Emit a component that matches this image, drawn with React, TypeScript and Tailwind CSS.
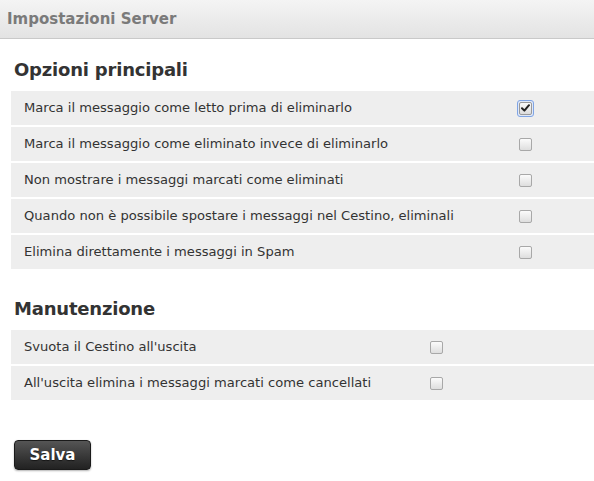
const main = [
  { label: 'Marca il messaggio come letto prima di eliminarlo', checked: true },
  { label: 'Marca il messaggio come eliminato invece di eliminarlo', checked: false },
  { label: 'Non mostrare i messaggi marcati come eliminati', checked: false },
  { label: 'Quando non è possibile spostare i messaggi nel Cestino, eliminali', checked: false },
  { label: 'Elimina direttamente i messaggi in Spam', checked: false },
];

const maintenance = [
  { label: "Svuota il Cestino all'uscita", checked: false },
  { label: "All'uscita elimina i messaggi marcati come cancellati", checked: false },
];

function Check({ checked }: { checked: boolean }) {
  if (checked) {
    return (
      <span className="flex h-[17px] w-[17px] items-center justify-center rounded-[3px] border border-[#7fa4e4] bg-[#dfe8f8]">
        <span className="flex h-[13px] w-[13px] items-center justify-center rounded-[2px] border border-[#9a9a9a] bg-gradient-to-b from-[#fafafa] to-[#dcdcdc]">
          <svg width="9" height="8" viewBox="0 0 9 8">
            <path d="M1 4.2 L3.4 6.6 L8 1.2" fill="none" stroke="#222" strokeWidth="2" strokeLinecap="round" strokeLinejoin="round" />
          </svg>
        </span>
      </span>
    );
  }
  return (
    <span className="m-[2px] block h-[13px] w-[13px] rounded-[2px] border border-[#a8a8a8] bg-gradient-to-b from-[#fbfbfb] to-[#dedede]" />
  );
}

function Section({ title, rows, labelWidth }: { title: string; rows: { label: string; checked: boolean }[]; labelWidth: string }) {
  return (
    <section>
      <h2 className="pl-[14px] text-[18px] font-bold leading-[22px] tracking-[-0.2px] text-[#333]">{title}</h2>
      <div className="ml-[11px] mt-[10px] flex flex-col gap-[2px]">
        {rows.map((r) => (
          <div key={r.label} className="flex h-[34px] items-center bg-[#eeeeee]">
            <div className={`${labelWidth} shrink-0 pl-[13px] text-[13.1px] text-[#333]`}>{r.label}</div>
            <Check checked={r.checked} />
          </div>
        ))}
      </div>
    </section>
  );
}

export default function App() {
  return (
    <div className="h-[481px] w-[594px] bg-white" style={{ fontFamily: '"DejaVu Sans", Verdana, sans-serif' }}>
      <div className="flex h-[39px] items-center border-b border-[#c9c9c9] bg-gradient-to-b from-[#f4f4f4] to-[#e3e3e3] pl-[7px]">
        <span className="text-[15px] font-bold text-[#7a7a7a]">Impostazioni Server</span>
      </div>
      <div className="pt-[20px]">
        <Section title="Opzioni principali" rows={main} labelWidth="w-[506px]" />
      </div>
      <div className="pt-[29px]">
        <Section title="Manutenzione" rows={maintenance} labelWidth="w-[417px]" />
      </div>
      <div className="pl-[14px] pt-[40px]">
        <button className="h-[30px] w-[77px] rounded-[4px] border border-[#1a1a1a] bg-gradient-to-b from-[#555] to-[#222] text-[15px] font-bold text-white shadow-[0_1px_2px_rgba(0,0,0,0.3)] [text-shadow:0_1px_1px_rgba(0,0,0,0.6)]">
          Salva
        </button>
      </div>
    </div>
  );
}
